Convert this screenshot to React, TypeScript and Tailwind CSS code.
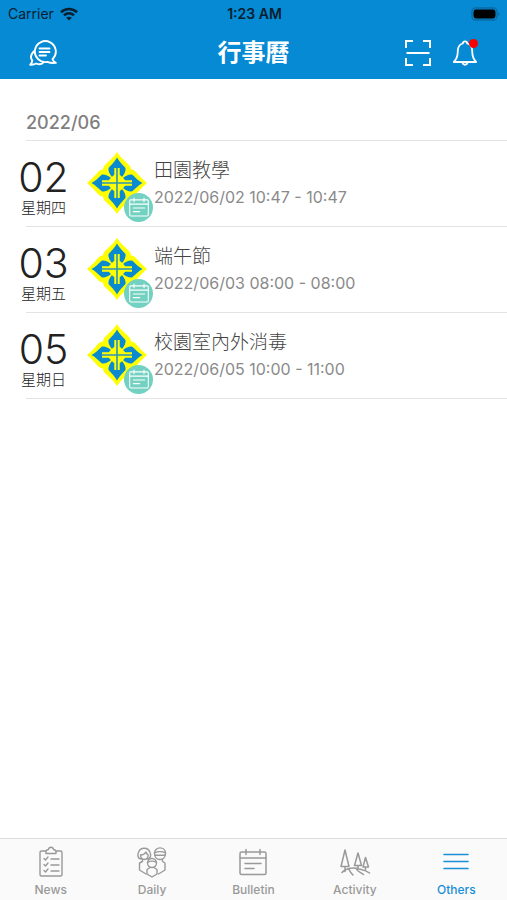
import type { ReactNode } from "react";

interface CalendarEvent {
  day: string;
  weekday: string;
  title: string;
  time: string;
}

interface Tab {
  label: string;
  icon: ReactNode;
  active?: boolean;
}

const events: CalendarEvent[] = [
  { day: "02", weekday: "星期四", title: "田園教學", time: "2022/06/02 10:47 - 10:47" },
  { day: "03", weekday: "星期五", title: "端午節", time: "2022/06/03 08:00 - 08:00" },
  { day: "05", weekday: "星期日", title: "校園室內外消毒", time: "2022/06/05 10:00 - 11:00" },
];

const line = {
  fill: "none",
  stroke: "currentColor",
  strokeLinecap: "round",
  strokeLinejoin: "round",
} as const;

function WifiIcon() {
  return (
    <svg viewBox="0 0 18 14" className="h-[14px] w-[18px]" fill="none" stroke="currentColor" strokeWidth="2.6">
      <path d="M1 5.2C5.5.9 12.5.9 17 5.2" />
      <path d="M4 8.4c2.9-2.7 7.1-2.7 10 0" />
      <path d="M9 13.6 6.2 10.8c1.6-1.4 4-1.4 5.6 0z" fill="currentColor" stroke="none" />
    </svg>
  );
}

function BatteryIcon() {
  return (
    <svg viewBox="0 0 30 14" className="h-[14px] w-[30px]">
      <rect x="1" y="1" width="25" height="12" rx="3.5" fill="none" stroke="#0a6aa5" strokeWidth="1.4" />
      <rect x="2.5" y="2.5" width="22" height="9" rx="2.4" fill="#000" />
      <path d="M27.5 5v4c1.6-.5 1.6-3.5 0-4z" fill="#0a6aa5" />
    </svg>
  );
}

function ChatIcon() {
  return (
    <svg viewBox="0 0 28 28" className="size-7" {...line} strokeWidth="1.9">
      <path d="M23.5 20.3A10.5 10.5 0 1 0 18.5 22.9c1 .5 4.500 1.3 8.300 1-1.800-1-2.800-2.200-3.300-3.600z" />
      <path d="M4.600 12.500C1.500 16 1.600 19.500 3.300 21.600c-.1 1.800-.9 3-2.100 4.100 2.300.2 4.300-.2 6-1.200 3 1.300 5.700.6 7.300-1.200" />
      <path d="M10.500 9.500h10M10.500 13h10M10.500 16.500h6.500" />
    </svg>
  );
}

function ScanIcon() {
  return (
    <svg viewBox="0 0 28 28" className="size-7" fill="none" stroke="currentColor" strokeWidth="2">
      <path d="M2 9V2h7M19 2h7v7M26 19v7h-7M9 26H2v-7M2.5 14h23" />
    </svg>
  );
}

function BellIcon() {
  return (
    <svg viewBox="0 0 26 28" className="h-7 w-[26px]" {...line} strokeWidth="1.8">
      <path d="M10.800 4.500a2.200 2.200 0 0 1 4.400 0c3.600 1 5 4 5 7.500 0 5.500.8 8 4 11H1.800c3.200-3 4-5.500 4-11 0-3.500 1.400-6.500 5-7.500z" />
      <path d="M10.500 23.500c.3 3 4.700 3 5 0" />
    </svg>
  );
}

function CalendarIcon({ className }: { className: string }) {
  return (
    <svg viewBox="0 0 28 28" className={className} {...line} strokeWidth="1.5">
      <rect x="1" y="4" width="26" height="22.5" rx="1.5" />
      <path d="M1 10h26M7 1.500v5M21 1.500v5M6 15.500h16M6 20.500h9" />
    </svg>
  );
}

function NewsIcon() {
  return (
    <svg viewBox="0 0 26 32" className="h-8 w-[26px]" {...line} strokeWidth="1.4">
      <path d="M8 5H3.500A1.500 1.500 0 0 0 2 6.500v22A1.500 1.500 0 0 0 3.500 30h19a1.500 1.500 0 0 0 1.500-1.500v-22A1.500 1.500 0 0 0 22.500 5H18" />
      <path d="M8 7.500V5.500C8 4 9 3.700 10.500 3.500 11 .500 15 .500 15.500 3.500 17 3.700 18 4 18 5.500v2z" />
      <path d="m6 12.500 1.500 1.500 2.500-3M13 13h8M6 18.500 7.500 20l2.500-3M13 19h8M6 24.500 7.500 26l2.500-3M13 25h8" />
    </svg>
  );
}

function FamilyIcon() {
  return (
    <svg viewBox="0 0 30 32" className="h-8 w-[30px]" {...line} strokeWidth="1.4">
      {/* mother */}
      <path d="M4.500 13C.8 13 .3 9 1.500 6.500 3 .8 11.500.8 13 6.500c1.200 2.500.7 6.500-3 6.500" />
      <path d="M3.500 9c3 0 4.500-1.200 5.500-3 .5 1.500 1.200 2.300 2.200 3-.2 2.700-1.500 4.500-3.800 4.500S3.700 11.700 3.500 9z" />
      <path d="M5.500 13.500v2L2.500 17v7l6.500 4" />
      {/* father */}
      <path d="M17.500 7.500c0-7.500 11-7.500 11 0 0 8-11 8-11 0z" />
      <path d="M17.500 7c3-1.800 8-1.800 11 0M18 9.200h10M25.500 13.500v2l2.500 1.500v7l-6.500 4" />
      {/* child */}
      <circle cx="15" cy="17" r="4.5" />
      <path d="M10.500 16.500c3-1.800 6-1.800 9 0M13 21.500 10 23.500V28l5 3 5-3v-4.500l-3-2" />
    </svg>
  );
}

function TreesIcon() {
  return (
    <svg viewBox="0 0 32 28" className="h-7 w-8" {...line} strokeWidth="1.5">
      <path d="M6 2 2 18.500h8zM6 18.500v5M19 5l-3.500 12.500h7zM19 17.500v3M26.500 9.500l-2.500 9.500h5.500zM26.500 19v2.500" />
      <path d="M3 24.500c5-5 13-5 17-3.500 4 1 7 1.500 10.500 4M10 21.500c1 2.500 2.500 4 4 5.500M17 20.500c1.500 3 4 3.500 7.500 6" />
    </svg>
  );
}

function MenuIcon() {
  return (
    <svg viewBox="0 0 26 20" className="h-5 w-[26px]" {...line} strokeWidth="1.6">
      <path d="M1 2.500h24M1 9.500h24M1 16.500h24" />
    </svg>
  );
}

function SchoolEmblem() {
  return (
    <svg viewBox="0 0 60 62" className="h-[62px] w-[60px]">
      <path
        d="M30 0C33 5 37 8 42 13c1.500 1.500 2 3 2 4.500 1.800 0 3.500.8 5 2.500 4 4.500 7 7.500 11 11-4 3.500-7 6.500-11 11-1.500 1.700-3.200 2.500-5 2.500 0 1.500-.5 3-2 4.500-5 5-9 8-12 13-3-5-7-8-12-13-1.500-1.500-2-3-2-4.500-1.800 0-3.500-.8-5-2.500C7 37.500 4 34.500 0 31c4-3.500 7-6.500 11-11 1.500-1.700 3.200-2.500 5-2.500 0-1.500.5-3 2-4.500C23 8 27 5 30 0z"
        fill="#ffff00"
      />
      {[0, 90, 180, 270].map((angle) => (
        <path
          key={angle}
          d="M30 5.500c2 4 5.500 7 8.500 10.500.5 3-1 6-3.500 9-1-1.500-2-2-3-2h-4c-1 0-2 .5-3 2-2.500-3-4-6-3.500-9C24.500 12.500 28 9.500 30 5.500z"
          fill="#0a8bd0"
          transform={`rotate(${angle} 30 31)`}
        />
      ))}
      <path d="M30 16v30M15 31h30" stroke="#ffff00" strokeWidth="5.4" />
      <path d="M30 16v30M15 31h30" stroke="#2b95b5" strokeWidth="1.6" />
    </svg>
  );
}

function EventRow({ event }: { event: CalendarEvent }) {
  return (
    <li>
      <div className="flex h-[85px] items-center">
        <div className="flex w-[87px] flex-col items-center pt-0.5">
          <span className="text-[41px] leading-[46px] font-light text-[#222]">{event.day}</span>
          <span className="text-[15px] leading-4 font-light text-[#222]">{event.weekday}</span>
        </div>
        <div className="relative shrink-0 pb-0.5">
          <SchoolEmblem />
          <span className="absolute -right-1.5 -bottom-1.5 flex size-[29px] items-center justify-center rounded-full bg-[#72d1c1] text-white">
            <CalendarIcon className="size-5" />
          </span>
        </div>
        <div className="ml-[7px] min-w-0 pb-0.5">
          <h3 className="text-[19px] leading-7 font-light text-[#444]">{event.title}</h3>
          <p className="text-base leading-6 text-[#8a8a8a]">{event.time}</p>
        </div>
      </div>
      <hr className="ml-[26px] border-[#e3e3e3]" />
    </li>
  );
}

const tabs: Tab[] = [
  { label: "News", icon: <NewsIcon /> },
  { label: "Daily", icon: <FamilyIcon /> },
  { label: "Bulletin", icon: <CalendarIcon className="h-7 w-[30px]" /> },
  { label: "Activity", icon: <TreesIcon /> },
  { label: "Others", icon: <MenuIcon />, active: true },
];

export default function App() {
  return (
    <div className="flex min-h-screen flex-col bg-white font-['Inter','Noto_Sans_CJK_TC',sans-serif]">
      <header className="bg-[#058ad3]">
        <div className="grid h-[27px] grid-cols-3 items-center pr-1.5 pl-2 text-sm text-[#06202f]">
          <div className="flex items-center gap-1.5">
            <span>Carrier</span>
            <WifiIcon />
          </div>
          <span className="text-center font-semibold">1:23 AM</span>
          <div className="flex justify-end">
            <BatteryIcon />
          </div>
        </div>
        <div className="grid h-[52px] grid-cols-3 items-center px-[29px] text-white">
          <button type="button" aria-label="Messages" className="justify-self-start">
            <ChatIcon />
          </button>
          <h1 className="text-center text-2xl font-bold">行事曆</h1>
          <div className="flex items-center justify-end gap-5">
            <button type="button" aria-label="Scan">
              <ScanIcon />
            </button>
            <button type="button" aria-label="Notifications" className="relative">
              <BellIcon />
              <span className="absolute top-0 right-0 size-[9px] rounded-full bg-[#ff0000]" />
            </button>
          </div>
        </div>
      </header>

      <main className="flex-1 pt-8">
        <h2 className="pb-[5px] pl-[26px] text-lg leading-6 font-medium text-[#808080]">2022/06</h2>
        <hr className="ml-[26px] border-[#e3e3e3]" />
        <ul>
          {events.map((event) => (
            <EventRow key={event.day} event={event} />
          ))}
        </ul>
      </main>

      <nav className="grid grid-cols-5 border-t border-[#dcdcdc] bg-[#fafafa]">
        {tabs.map((tab) => (
          <a
            key={tab.label}
            href="#"
            className={`flex flex-col items-center pt-[7px] pb-0.5 ${tab.active ? "text-[#1a8fd6]" : "text-[#999]"}`}
          >
            <span className="flex h-8 items-center">{tab.icon}</span>
            <span className="mt-1 text-xs leading-4 font-medium">{tab.label}</span>
          </a>
        ))}
      </nav>
    </div>
  );
}
